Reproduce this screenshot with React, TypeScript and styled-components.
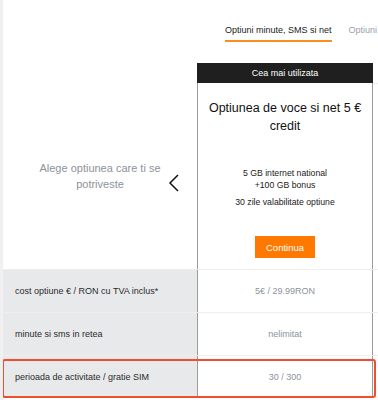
import React from "react";
import styled, { createGlobalStyle } from "styled-components";

const Global = createGlobalStyle`
  html, body { margin: 0; padding: 0; background: #ffffff; }
  body { font-family: "Liberation Sans", Arial, Helvetica, sans-serif; }
  * { box-sizing: border-box; }
`;

const Page = styled.div`
  width: 378px;
  min-height: 400px;
  border-left: 3px solid #f0f0f1;
  overflow: hidden;
`;

const Tabs = styled.div`
  display: flex;
  gap: 17px;
  height: 48px;
  padding-left: 222px;
  white-space: nowrap;
  overflow: hidden;
`;

const Tab = styled.div<{ $active?: boolean }>`
  font-size: 9px;
  line-height: 12px;
  padding-top: 24px;
  padding-bottom: 4px;
  height: 42px;
  color: ${(p) => (p.$active ? "#1a1a1a" : "#9aa0a8")};
  border-bottom: 2px solid ${(p) => (p.$active ? "#f7901e" : "transparent")};
`;

const Top = styled.div`
  margin-top: 15px;
  display: grid;
  grid-template-columns: 194px 176px 1fr;
  height: 206px;
`;

const Intro = styled.div`
  display: flex;
  align-items: flex-start;
  padding-top: 97px;
  padding-left: 29px;
`;

const IntroText = styled.div`
  width: 136px;
  font-size: 11px;
  line-height: 16px;
  color: #8d929b;
  text-align: center;
`;

const Chevron = styled.svg`
  margin-top: 14px;
  flex: none;
`;

const Card = styled.div`
  display: flex;
  flex-direction: column;
`;

const CardHeader = styled.div`
  height: 20px;
  line-height: 20px;
  background: #1f1f1f;
  color: #ffffff;
  font-size: 9px;
  text-align: center;
`;

const CardBody = styled.div`
  flex: 1;
  border-left: 1px solid #9b9b9b;
  border-right: 1px solid #9b9b9b;
  padding: 16px 8px 11px;
  text-align: center;
  display: flex;
  flex-direction: column;
  align-items: center;
`;

const Title = styled.div`
  font-size: 12.5px;
  line-height: 18px;
  color: #111111;
`;

const Features = styled.div`
  margin-top: 32px;
  display: flex;
  flex-direction: column;
`;

const Feature = styled.div<{ $spaced?: boolean }>`
  font-size: 8.7px;
  line-height: 12px;
  color: #1a1a1a;
  margin-top: ${(p) => (p.$spaced ? "5px" : "0")};
`;

const Button = styled.button`
  margin-top: 28px;
  width: 60px;
  height: 22px;
  border: none;
  padding: 0;
  background: #ff7900;
  color: #ffffff;
  font-family: inherit;
  font-size: 9.5px;
`;

const Rest = styled.div`
  margin-top: 20px;
  border-top: 1px solid #ececec;
`;

const Row = styled.div<{ $highlight?: boolean }>`
  position: relative;
  display: grid;
  grid-template-columns: 194px 176px 1fr;
  height: 43px;
  border-top: 1px solid #eeeeee;
  &::after {
    content: "";
    display: ${(p) => (p.$highlight ? "block" : "none")};
    position: absolute;
    top: 3px;
    bottom: 0;
    left: -1px;
    width: 370px;
    border: 2px solid #f04e2f;
    border-radius: 3px;
  }
`;

const Label = styled.div`
  background: #e8e9eb;
  display: flex;
  align-items: center;
  padding-left: 12px;
  font-size: 9px;
  color: #2b2b2b;
`;

const Value = styled.div`
  border-left: 1px solid #9b9b9b;
  border-right: 1px solid #9b9b9b;
  display: flex;
  align-items: center;
  justify-content: center;
  font-size: 9px;
  color: #8d929b;
`;

const rows = [
  { label: "cost optiune € / RON cu TVA inclus*", value: "5€ / 29.99RON" },
  { label: "minute si sms in retea", value: "nelimitat" },
  { label: "perioada de activitate / gratie SIM", value: "30 / 300", highlight: true },
];

export default function App() {
  return (
    <>
      <Global />
      <Page>
        <Tabs>
          <Tab $active>Optiuni minute, SMS si net</Tab>
          <Tab>Optiuni</Tab>
        </Tabs>
        <Top>
          <Intro>
            <IntroText>Alege optiunea care ti se potriveste</IntroText>
            <Chevron width="12" height="18" viewBox="0 0 12 18">
              <path d="M10 1 L2 9 L10 17" fill="none" stroke="#111" strokeWidth="1.5" />
            </Chevron>
          </Intro>
          <Card>
            <CardHeader>Cea mai utilizata</CardHeader>
            <CardBody>
              <Title>
                Optiunea de voce si net 5 €
                <br />
                credit
              </Title>
              <Features>
                <Feature>5 GB internet national</Feature>
                <Feature>+100 GB bonus</Feature>
                <Feature $spaced>30 zile valabilitate optiune</Feature>
              </Features>
              <Button>Continua</Button>
            </CardBody>
          </Card>
          <Rest />
        </Top>
        {rows.map((r) => (
          <Row key={r.label} $highlight={r.highlight}>
            <Label>{r.label}</Label>
            <Value>{r.value}</Value>
            <div />
          </Row>
        ))}
      </Page>
    </>
  );
}
